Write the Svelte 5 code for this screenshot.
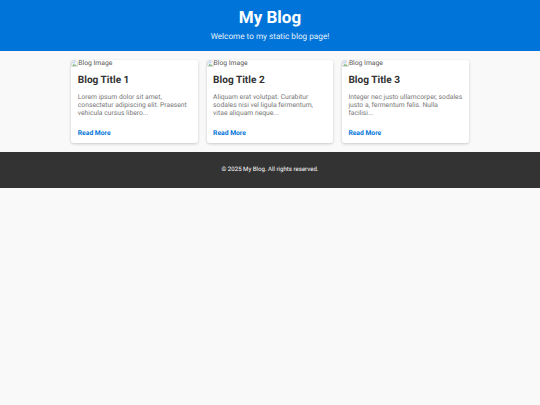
<script>
  const posts = [
    { title: 'Blog Title 1', text: 'Lorem ipsum dolor sit amet, consectetur adipiscing elit. Praesent vehicula cursus libero...' },
    { title: 'Blog Title 2', text: 'Aliquam erat volutpat. Curabitur sodales nisi vel ligula fermentum, vitae aliquam neque...' },
    { title: 'Blog Title 3', text: 'Integer nec justo ullamcorper, sodales justo a, fermentum felis. Nulla facilisi...' }
  ];
</script>

<header>
  <h1>My Blog</h1>
  <p>Welcome to my static blog page!</p>
</header>

<main>
  {#each posts as post}
    <article>
      <div class="img">
        <svg viewBox="0 0 16 16" width="7" height="7" aria-hidden="true">
          <path d="M1.5 1.5h9l4 4v9h-13z" fill="#fff" stroke="#a8a8a8" />
          <path d="M3 3h7v5H3z" fill="#c6d9f5" />
          <path d="M3 13l3-4 2 2 2-1 3 3z" fill="#6aaa5f" />
        </svg>
        <span>Blog Image</span>
      </div>
      <div class="body">
        <h2>{post.title}</h2>
        <p>{post.text}</p>
        <a href="#top">Read More</a>
      </div>
    </article>
  {/each}
</main>

<footer>© 2025 My Blog. All rights reserved.</footer>

<style>
  :global(body) {
    margin: 0;
    background: #f9f9f9;
    font-family: Roboto, sans-serif;
    color: #333;
    text-rendering: geometricPrecision;
  }
  header {
    height: 50.5px;
    box-sizing: border-box;
    background: #0074d9;
    color: #fff;
    text-align: center;
    padding-top: 7.5px;
  }
  h1 {
    margin: 0;
    font-size: 17px;
    line-height: 21px;
    font-weight: 700;
  }
  header p {
    margin: 3.5px 0 0;
    font-size: 8.2px;
    line-height: 10px;
    color: #e6f1fb;
  }
  main {
    display: flex;
    justify-content: center;
    gap: 8.5px;
    padding: 9px 0 8.5px;
  }
  article {
    width: 126.8px;
    height: 83.5px;
    background: #fff;
    border-radius: 3px;
    box-shadow: 0 1px 3px rgba(0, 0, 0, 0.2);
    overflow: hidden;
  }
  .img {
    display: flex;
    align-items: center;
    height: 7px;
    padding-top: 0.5px;
    font-size: 6.75px;
    line-height: 7px;
    color: #555;
  }
  .img svg {
    flex: none;
  }
  .body {
    padding: 7.5px 6.5px 0;
  }
  h2 {
    margin: 0;
    font-size: 10.1px;
    line-height: 12px;
    font-weight: 700;
    color: #333;
  }
  .body p {
    margin: 6.5px 0 0;
    font-size: 6.75px;
    line-height: 8px;
    color: #777;
    height: 24px;
  }
  a {
    display: block;
    margin-top: 11.5px;
    font-size: 6.75px;
    line-height: 8px;
    font-weight: 700;
    color: #0074d9;
    text-decoration: none;
  }
  footer {
    height: 36px;
    background: #333;
    color: #fff;
    font-size: 6.1px;
    line-height: 35px;
    text-align: center;
  }
</style>
